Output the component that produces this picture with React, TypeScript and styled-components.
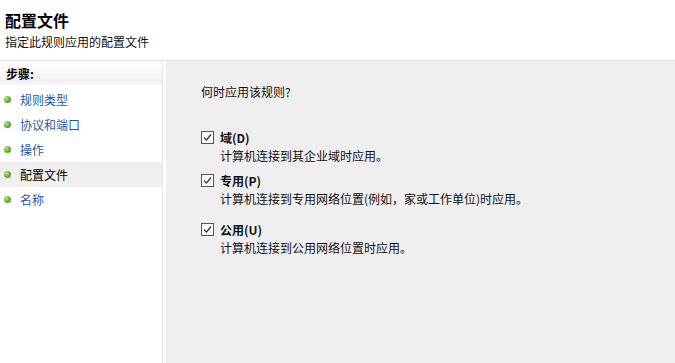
import React from 'react'
import styled, { createGlobalStyle } from 'styled-components'

const GlobalStyle = createGlobalStyle`
    html, body {
        margin: 0;
        padding: 0;
        background: #ffffff;
    }
    body {
        font-family: "Noto Sans CJK SC", "Liberation Sans", sans-serif;
        font-size: 12px;
        color: #1a1a1a;
    }
`

const Page = styled.div`
    display: flex;
    flex-direction: column;
    width: 675px;
    height: 363px;
    overflow: hidden;
    background: #ffffff;
`

const Header = styled.div`
    display: flex;
    flex-direction: column;
    height: 61px;
    padding: 10px 0 0 5px;
    box-sizing: border-box;
    border-bottom: 1px solid #e4e4e4;
`

const Title = styled.h1`
    margin: 0;
    font-size: 16px;
    line-height: 20px;
    font-weight: 700;
    color: #000;
`

const Subtitle = styled.p`
    margin: 3px 0 0;
    font-size: 12px;
    line-height: 17px;
    color: #111;
`

const Body = styled.div`
    display: flex;
    flex: 1;
    min-height: 0;
`

const Sidebar = styled.div`
    display: flex;
    flex-direction: column;
    width: 162px;
    border-right: 1px solid #e8e8e8;
    margin-right: 3px;
`

const SidebarHeader = styled.div`
    height: 24px;
    padding-left: 6px;
    display: flex;
    align-items: center;
    font-weight: 700;
    font-size: 12px;
    color: #000;
    background: linear-gradient(#ffffff, #f1f1f1 85%, #fafafa);
`

const StepList = styled.ul`
    margin: 2px 0 0;
    padding: 0;
    list-style: none;
`

const StepItem = styled.li<{ $active?: boolean }>`
    display: flex;
    align-items: center;
    height: 25px;
    padding-left: 4px;
    gap: 9px;
    background: ${p => (p.$active ? '#efefef' : 'transparent')};
    color: ${p => (p.$active ? '#000' : '#1e5aa0')};
`

const Bullet = styled.span`
    width: 7px;
    height: 7px;
    border-radius: 50%;
    background: radial-gradient(circle at 35% 35%, #b6e88a, #5cae2e 55%, #3c8a1c);
`

const Main = styled.div`
    flex: 1;
    background: #efefef;
    padding: 22px 0 0 35px;
`

const Prompt = styled.p`
    margin: 0 0 29px;
    line-height: 17px;
    color: #111;
`

const Option = styled.div<{ $gap: number }>`
    margin-top: ${p => p.$gap}px;
`

const OptionRow = styled.div`
    display: flex;
    align-items: center;
    gap: 6px;
`

const Box = styled.span`
    display: inline-flex;
    align-items: center;
    justify-content: center;
    width: 13px;
    height: 13px;
    box-sizing: border-box;
    border: 1px solid #555;
    background: #fff;
`

const OptionLabel = styled.span`
    font-weight: 700;
    line-height: 17px;
    color: #111;
`

const OptionDesc = styled.div`
    margin: 1px 0 0 19px;
    line-height: 17px;
    color: #111;
`

function CheckBox() {
    return (
        <Box>
            <svg width="9" height="9" viewBox="0 0 9 9">
                <path d="M1 4.5 L3.5 7 L8 1.5" fill="none" stroke="#333" strokeWidth="1.2" />
            </svg>
        </Box>
    )
}

const steps = ['规则类型', '协议和端口', '操作', '配置文件', '名称']

const options = [
    { label: '域(D)', desc: '计算机连接到其企业域时应用。', gap: 0 },
    { label: '专用(P)', desc: '计算机连接到专用网络位置(例如，家或工作单位)时应用。', gap: 8 },
    { label: '公用(U)', desc: '计算机连接到公用网络位置时应用。', gap: 14 },
]

export default function App() {
    return (
        <Page>
            <GlobalStyle />
            <Header>
                <Title>配置文件</Title>
                <Subtitle>指定此规则应用的配置文件</Subtitle>
            </Header>
            <Body>
                <Sidebar>
                    <SidebarHeader>步骤:</SidebarHeader>
                    <StepList>
                        {steps.map(s => (
                            <StepItem key={s} $active={s === '配置文件'}>
                                <Bullet />
                                {s}
                            </StepItem>
                        ))}
                    </StepList>
                </Sidebar>
                <Main>
                    <Prompt>何时应用该规则?</Prompt>
                    {options.map(o => (
                        <Option key={o.label} $gap={o.gap}>
                            <OptionRow>
                                <CheckBox />
                                <OptionLabel>{o.label}</OptionLabel>
                            </OptionRow>
                            <OptionDesc>{o.desc}</OptionDesc>
                        </Option>
                    ))}
                </Main>
            </Body>
        </Page>
    )
}
